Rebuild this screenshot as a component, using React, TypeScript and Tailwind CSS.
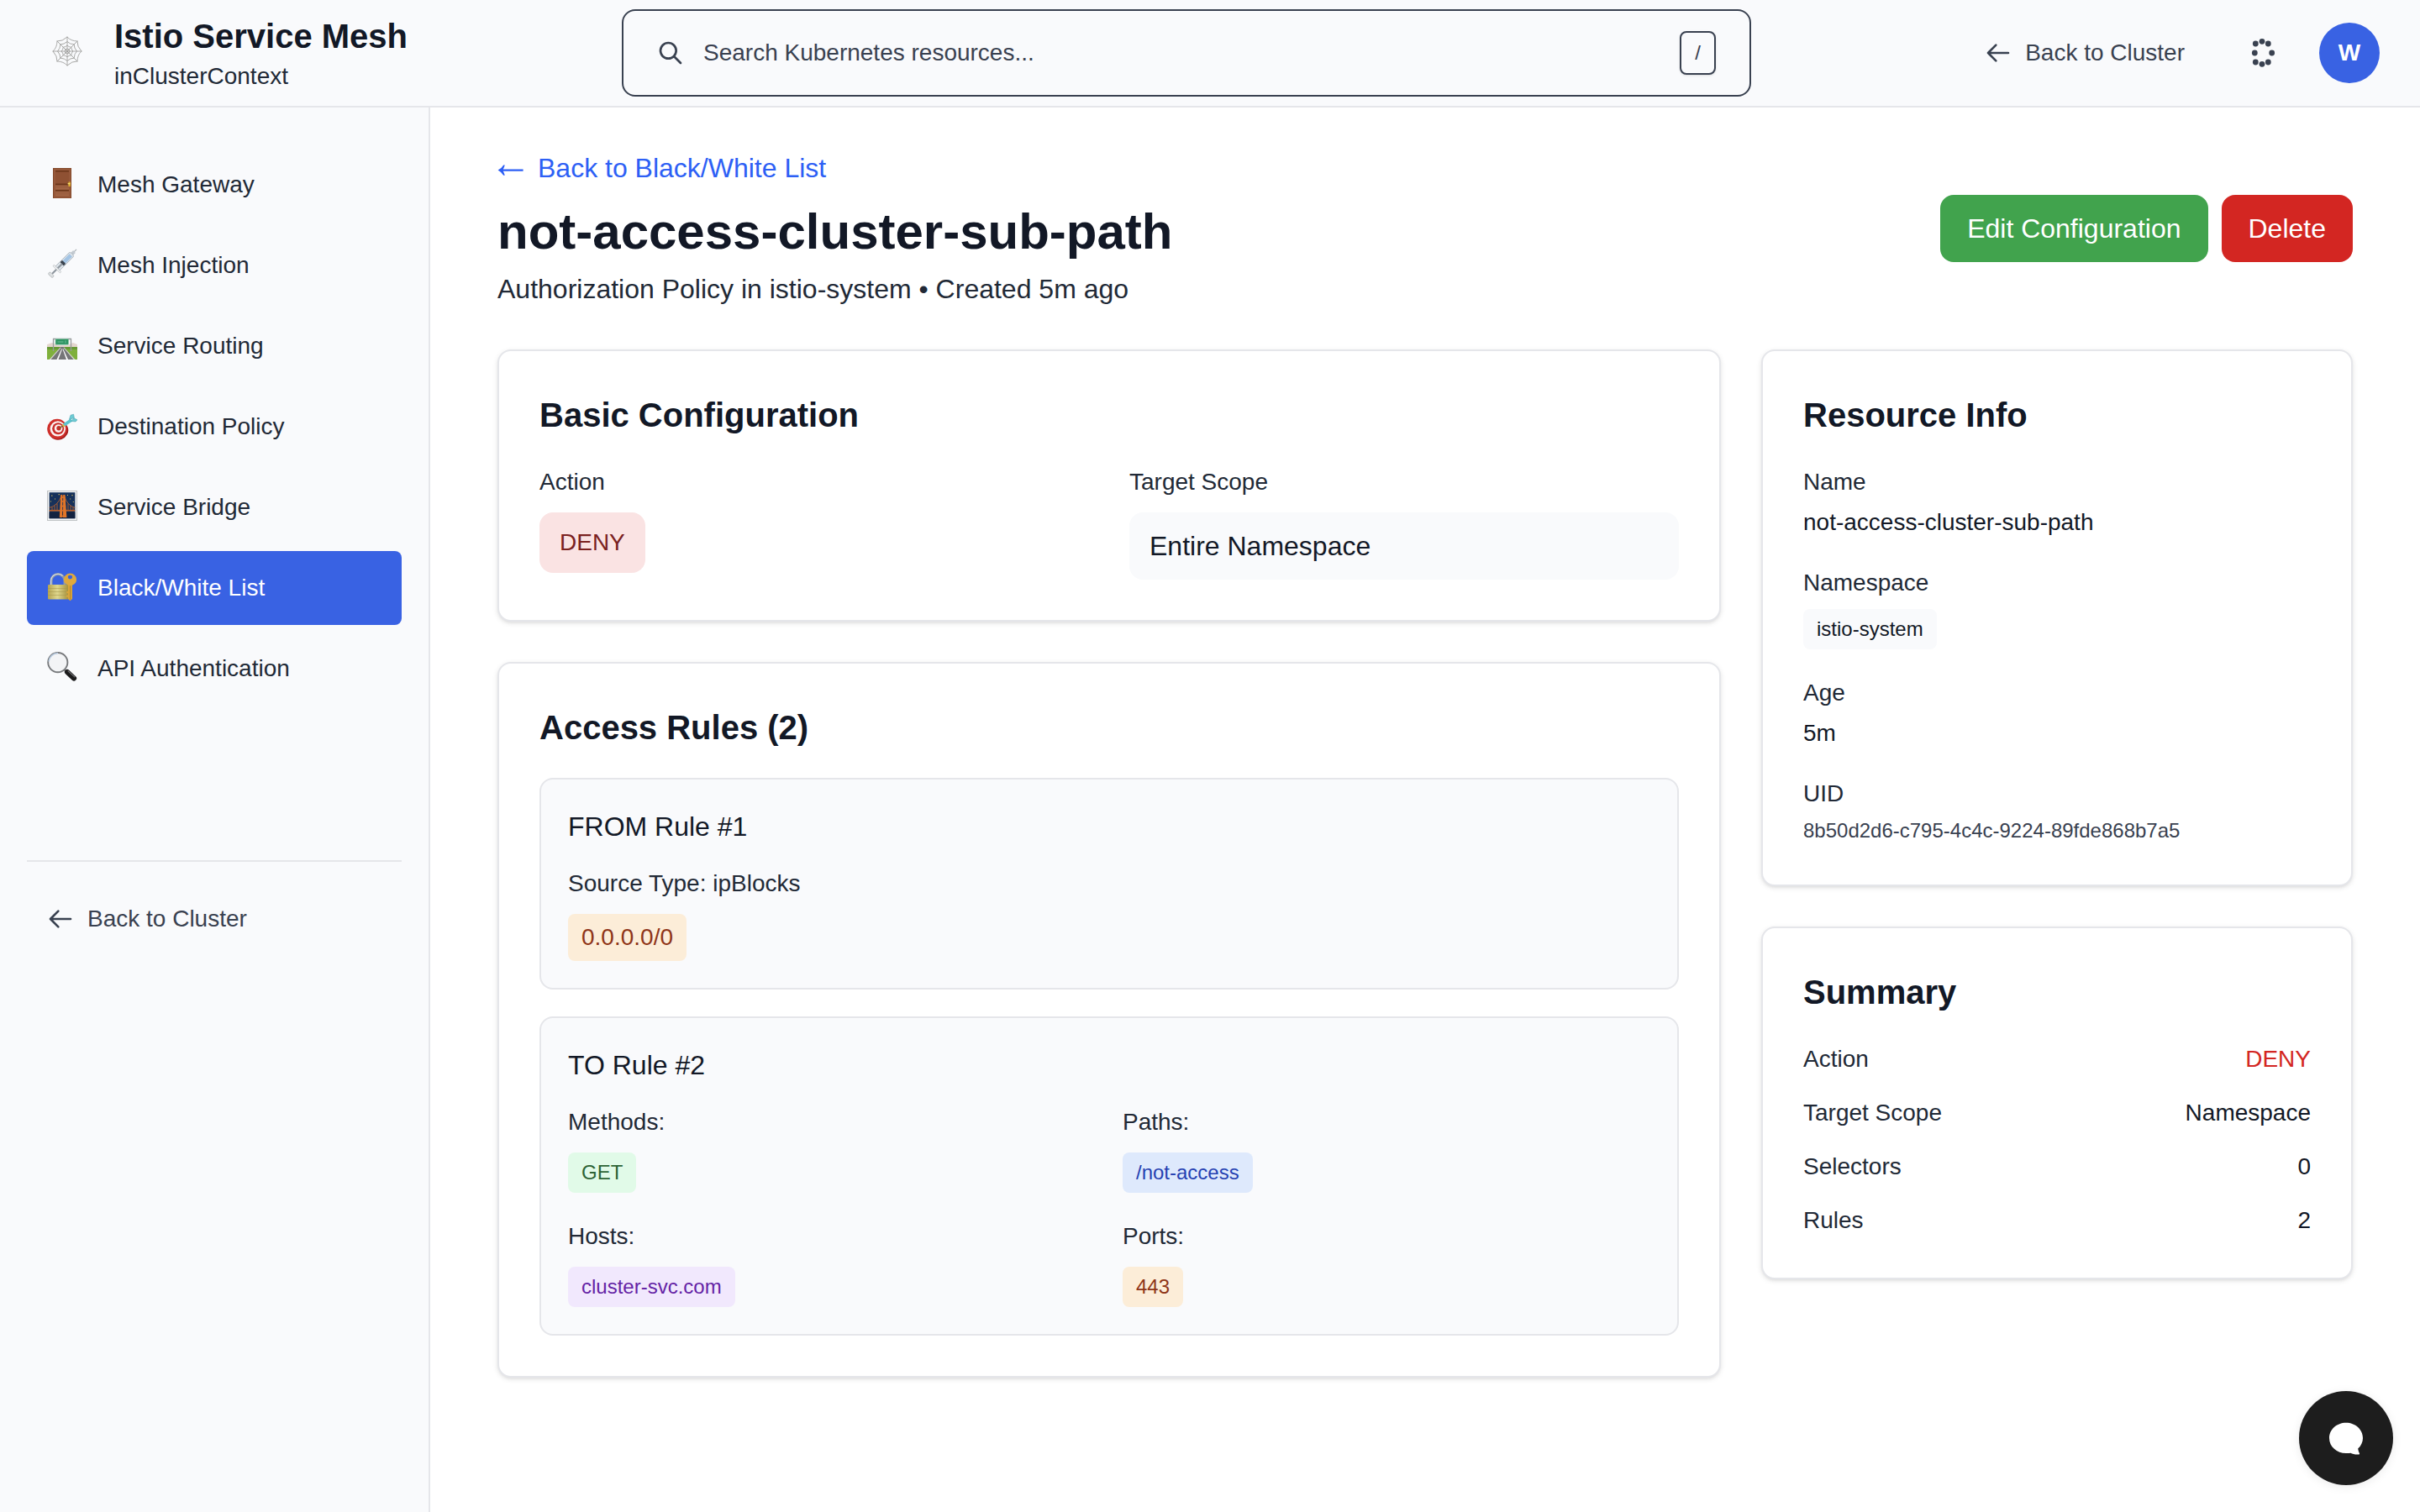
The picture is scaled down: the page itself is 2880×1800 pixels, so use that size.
import type { ReactNode } from 'react';

function ArrowLeft() {
  return (
    <svg className="h-8 w-8 shrink-0" viewBox="0 0 24 24" fill="none" stroke="currentColor" strokeWidth={2} strokeLinecap="round" strokeLinejoin="round">
      <path d="M10 19l-7-7m0 0l7-7m-7 7h18" />
    </svg>
  );
}

function LongArrowLeft() {
  return (
    <svg className="h-12 w-8 shrink-0" viewBox="0 0 32 48" fill="currentColor">
      <path d="M.6 26.6Q5.2 24 7.2 20.4H8.8Q8 23.2 6.8 25.4H30.6V27.8H6.8Q8 30 8.8 32.8H7.2Q5.2 29.2 .6 26.6z" />
    </svg>
  );
}

function SearchIcon() {
  return (
    <svg className="h-8 w-8 shrink-0" viewBox="0 0 24 24" fill="none" stroke="currentColor" strokeWidth={2} strokeLinecap="round" strokeLinejoin="round">
      <path d="M21 21l-6-6m2-5a7 7 0 11-14 0 7 7 0 0114 0z" />
    </svg>
  );
}

function WebLogo() {
  const spokes = [0, 45, 90, 135, 180, 225, 270, 315];
  return (
    <svg className="mb-1 h-9 w-9" viewBox="-18 -18 36 36" fill="none" stroke="#a3a3a1" strokeWidth={0.9} strokeLinejoin="round">
      {spokes.map((a) => (
        <g key={a} transform={`rotate(${a})`}>
          <path d="M0 0V-17.5" />
          <path d="M0-17Q4.2-12.2 12-12" />
          <path d="M0-11.5Q3-8.4 8.1-8.1" />
          <path d="M0-6.8Q2-5 4.8-4.8" />
          <path d="M0-3Q1-2.3 2.1-2.1" />
        </g>
      ))}
    </svg>
  );
}

function ThemeIcon() {
  const dots = [[16, 2.3], [23.3, 5], [27.7, 16], [23.3, 27], [16, 29.3], [8.3, 27], [7.3, 16], [8.3, 5]];
  return (
    <svg className="h-8 w-8 overflow-visible" viewBox="0 0 32 32" fill="currentColor">
      {dots.map(([x, y]) => (
        <circle key={`${x}-${y}`} cx={x} cy={y} r={3.4} />
      ))}
    </svg>
  );
}

function DoorIcon() {
  return (
    <svg className="h-9 w-9" viewBox="0 0 36 36">
      <rect x="7" y="0" width="22" height="36" fill="#84492b" />
      <rect x="8" y="1" width="20" height="34.5" fill="#96583a" />
      <rect x="10" y="3" width="16" height="15.5" fill="#8f5133" />
      <path d="M10 3h16v1.6H10zM10 18.6h16v1.8H10zM10 26h16v1.8H10z" fill="#6a3519" />
      <path d="M10 20.4h16v3.8H10zM10 27.8h16v4H10z" fill="#9c5f40" />
      <path d="M10 24.2h16v1H10zM10 31.8h16v1H10z" fill="#a86b4b" />
      <rect x="25.4" y="16.5" width="2.6" height="5.6" rx=".5" fill="#d9a92f" />
      <rect x="24.6" y="18" width="3" height="1.4" fill="#f6dc73" />
    </svg>
  );
}

function SyringeIcon() {
  return (
    <svg className="h-9 w-9" viewBox="0 0 36 36">
      <path d="M28.5 7.5L35 .8" stroke="#a9afb5" strokeWidth="1.1" />
      <g transform="rotate(45 18 18)">
        <rect x="16" y="-2.5" width="4" height="4" fill="#c3cad1" />
        <path d="M14.5 2.5Q18-.5 21.5 2.5V26h-7z" fill="#dde4ea" stroke="#aab2ba" strokeWidth=".8" />
        <rect x="15.8" y="3.5" width="4.6" height="12" fill="#a3c4e4" />
        <rect x="15" y="15" width="6" height="3.6" rx="1" fill="#39424d" />
        <rect x="17" y="18" width="2" height="17" fill="#8d959d" />
        <rect x="12" y="25.6" width="12" height="2" rx="1" fill="#f2f4f5" stroke="#b3b8bc" strokeWidth=".7" />
        <rect x="14.4" y="35" width="7.2" height="3.4" rx="1.6" fill="#dcdfe1" stroke="#aeb2b5" strokeWidth=".7" />
      </g>
    </svg>
  );
}

function RoadIcon() {
  return (
    <svg className="h-9 w-9" viewBox="0 0 36 36">
      <path d="M0 18l6-2 7 3h11l7-3 5 2v4H0z" fill="#e4d6cf" />
      <rect y="21" width="36" height="15" fill="#7fb03c" />
      <path d="M0 21h36v3H0z" fill="#679a35" />
      <path d="M16 21h4l12 15H3z" fill="#757678" />
      <path d="M16.5 22L4.5 36h-1.8L15.8 21.5zM19.6 22l12 14h1.8L20.2 21.5z" fill="#d8d8d0" />
      <path d="M17.2 23.5L11.5 36h2l4.5-12.5zM18.5 23.5L23 36h2l-5.7-12.5z" fill="#fff" />
      <path d="M7 11.5h22M7.5 11v15M28.5 11v15" stroke="#979b9c" strokeWidth="1.3" />
      <rect x="10" y="11.5" width="15.6" height="6.8" rx=".8" fill="#2e9463" stroke="#93c8ad" strokeWidth=".7" />
      <path d="M12.5 15h7M22 13.4v3" stroke="#79c3a0" strokeWidth=".9" />
    </svg>
  );
}

function TargetIcon() {
  return (
    <svg className="h-9 w-9" viewBox="0 0 36 36">
      <g transform="translate(0 5)">
        <ellipse cx="13.6" cy="19.8" rx="11.8" ry="10.8" transform="rotate(-20 13.6 19.8)" fill="#a61c1c" />
        <circle cx="12" cy="17.6" r="11.8" fill="#cf2f2b" />
        <circle cx="12.8" cy="17.4" r="9.2" fill="#fbf3f2" />
        <circle cx="13.2" cy="17.2" r="7" fill="#c92d2a" />
        <circle cx="13.6" cy="17" r="4.8" fill="#fbf3f2" />
        <circle cx="14" cy="16.8" r="2.7" fill="#c92d2a" />
        <path d="M14.2 16.8l6-3.6" stroke="#7d5a2a" strokeWidth="1.5" />
        <path d="M18.4 12.4l2.4 2.4" stroke="#e0b63e" strokeWidth="2" />
        <path d="M19 11.4l9-6 2.2 3.2-8.7 5.6z" fill="#5cc4cf" />
        <path d="M26.4 6.4L28 1.2 31.6.2l.8 4.4zM28.4 8.4l3.6-3.6 4 2-2 2.200z" fill="#6dcbd4" stroke="#3e9aa8" strokeWidth=".5" />
      </g>
    </svg>
  );
}

function BridgeIcon() {
  return (
    <svg className="h-9 w-9" viewBox="0 0 36 36">
      <rect x=".5" y=".5" width="35" height="35" fill="#f5f6f6" stroke="#bfc2c4" />
      <rect x="2.6" y="2.2" width="30.8" height="31" fill="#16315a" />
      <path d="M2.6 25.5h30.8v7.7H2.6z" fill="#132240" />
      <path d="M2.6 20.5Q13 18 17 6.5M33.4 20.5Q24 18 20.5 6.5M6 20v4M9 18v6M12 15.5V24M25 15.5V24M28 18v6M31 20v4" fill="none" stroke="#b9622e" strokeWidth=".9" />
      <path d="M2.6 23.8h30.8" stroke="#b5602e" strokeWidth="1.8" />
      <path d="M14.8 32L16.2 5h2.2L18.2 32zM19 32L19.2 5h2.2l2 27z" fill="#e27528" />
      <path d="M16.4 8h5M16 13h5.6M15.8 18.5h6.4M15 30.5h8" stroke="#e27528" strokeWidth="1.6" />
      <path d="M5.2 5.6h1.2v1.2H5.2zM13.6 4h1.2v1.2h-1.2zM29.4 5h1.2v1.2h-1.2zM4 12.5h1v1H4zM9 9.5h1v1H9zM27.2 9.6h1v1h-1zM24 5h1v1h-1zM30.8 13h1v1h-1z" fill="#d9be5a" />
    </svg>
  );
}

function LockKeyIcon() {
  return (
    <svg className="h-9 w-9" viewBox="0 0 36 36">
      <defs>
        <linearGradient id="lockBody" x1="0" x2="1" y1="0" y2="0">
          <stop offset="0" stopColor="#b5a34f" />
          <stop offset=".45" stopColor="#dfd78e" />
          <stop offset="1" stopColor="#a48e37" />
        </linearGradient>
      </defs>
      <path d="M5 17v-5.5a8 8 0 0116 0V17" fill="none" stroke="#8f9aa6" strokeWidth="3" />
      <path d="M4.6 16v-4.5a8.4 8.4 0 0114-6" fill="none" stroke="#d6dce2" strokeWidth="1.2" />
      <rect x="1" y="16" width="25" height="17.5" rx="1" fill="url(#lockBody)" />
      <path d="M1 20.5h25M1 24.5h25M1 28.5h25" stroke="#a3944a" strokeWidth=".7" opacity=".7" />
      <path d="M25 15h5v18l-2.5 2.2L25 33z" fill="#d9a53a" />
      <path d="M25 24h-1.8v2.2H25zM25 28.5h-2.2v2.2H25z" fill="#d9a53a" />
      <path d="M27.8 16v18" stroke="#b17f24" strokeWidth=".9" />
      <path fillRule="evenodd" d="M27.5 2.6a7.6 7.3 0 100 14.6 7.6 7.3 0 000-14.6zm0 2.2a2.6 2.3 0 110 4.6 2.6 2.3 0 010-4.6z" fill="#e0a93c" />
    </svg>
  );
}

function MagnifierIcon() {
  return (
    <svg className="h-9 w-9" viewBox="0 0 36 36">
      <path d="M20 20.5l3 3" stroke="#777" strokeWidth="2.4" />
      <path d="M24 24l8 7.5" stroke="#1b1b1c" strokeWidth="6.2" strokeLinecap="round" />
      <path d="M25 22.8l7.8 7" stroke="#6b6b6d" strokeWidth="1.2" strokeLinecap="round" />
      <circle cx="12.8" cy="12.6" r="11.6" fill="#f3f4f6" stroke="#77797c" strokeWidth="1.9" />
      <path d="M2 11.5A11.2 11.2 0 0113 1.5" fill="none" stroke="#b9cbe0" strokeWidth="1.5" />
    </svg>
  );
}

const navItems = [
  { label: 'Mesh Gateway', icon: <DoorIcon /> },
  { label: 'Mesh Injection', icon: <SyringeIcon /> },
  { label: 'Service Routing', icon: <RoadIcon /> },
  { label: 'Destination Policy', icon: <TargetIcon /> },
  { label: 'Service Bridge', icon: <BridgeIcon /> },
  { label: 'Black/White List', icon: <LockKeyIcon />, active: true },
  { label: 'API Authentication', icon: <MagnifierIcon /> },
];

function Header() {
  return (
    <header className="flex h-32 items-center border-b-2 border-[#e5e6ea] bg-[#f9fafc] px-12 text-[#394150]">
      <div className="flex w-[692px] shrink-0 items-center gap-6">
        <div className="flex w-16 justify-center">
          <WebLogo />
        </div>
        <div>
          <h1 className="text-[40px] leading-[56px] font-bold text-[#121826]">Istio Service Mesh</h1>
          <p className="text-[28px] leading-10 text-[#212936]">inClusterContext</p>
        </div>
      </div>
      <div className="flex h-[104px] w-[1344px] shrink-0 items-center gap-[23px] rounded-2xl border-2 border-[#394150] px-10">
        <SearchIcon />
        <span className="flex-1 text-[28px] leading-10">Search Kubernetes resources...</span>
        <kbd className="flex h-[52px] w-[43px] items-center justify-center rounded-lg border-2 border-[#394150] bg-[#f9fafc] font-['Liberation_Sans',Arial,sans-serif] text-2xl shadow-sm">/</kbd>
      </div>
      <div className="ml-auto flex items-center">
        <a className="flex items-center gap-4 text-[28px] leading-10">
          <ArrowLeft />
          Back to Cluster
        </a>
        <button className="mr-[52px] ml-[76px]">
          <ThemeIcon />
        </button>
        <div className="flex h-[72px] w-[72px] items-center justify-center rounded-full bg-[#3962e3] text-[28px] font-bold text-white">W</div>
      </div>
    </header>
  );
}

function Sidebar() {
  return (
    <aside className="w-[512px] shrink-0 border-r-2 border-[#e5e6ea] bg-[#f9fafc] px-8 pt-12">
      <nav className="flex h-[848px] flex-col gap-2">
        {navItems.map((item) => (
          <a
            key={item.label}
            className={
              item.active
                ? 'flex h-[88px] items-center gap-6 rounded-lg bg-[#3962e3] px-6 text-[28px] leading-10 text-white'
                : 'flex h-[88px] items-center gap-6 rounded-lg px-6 text-[28px] leading-10 text-[#212936]'
            }
          >
            <span className="mb-1 shrink-0">{item.icon}</span>
            {item.label}
          </a>
        ))}
      </nav>
      <div className="border-t-2 border-[#e5e6ea] pt-6">
        <a className="flex h-[88px] items-center gap-4 px-6 text-[28px] leading-10 text-[#394150]">
          <ArrowLeft />
          Back to Cluster
        </a>
      </div>
    </aside>
  );
}

function Card({ title, children }: { title: string; children: ReactNode }) {
  return (
    <section className="rounded-2xl border-2 border-[#e5e6ea] bg-white p-12 shadow-[0_2px_6px_rgba(0,0,0,0.1),0_2px_4px_-2px_rgba(0,0,0,0.1)]">
      <h2 className="mb-8 text-[40px] leading-[56px] font-bold text-[#121826]">{title}</h2>
      {children}
    </section>
  );
}

function Label({ children }: { children: ReactNode }) {
  return <div className="text-[28px] leading-10 text-[#212936]">{children}</div>;
}

function BasicConfiguration() {
  return (
    <Card title="Basic Configuration">
      <div className="grid grid-cols-2 items-start gap-12">
        <div>
          <Label>Action</Label>
          <span className="mt-4 block w-fit rounded-2xl bg-[#fae3e3] px-6 py-4 text-[28px] leading-10 text-[#7a2120]">DENY</span>
        </div>
        <div>
          <Label>Target Scope</Label>
          <div className="mt-4 rounded-2xl bg-[#f9fafc] px-6 py-4 text-[32px] leading-[48px] text-[#121826]">Entire Namespace</div>
        </div>
      </div>
    </Card>
  );
}

const destinations = [
  { label: 'Methods:', value: 'GET', tone: 'bg-[#e1fae8] text-[#2d6335]' },
  { label: 'Paths:', value: '/not-access', tone: 'bg-[#dee9fc] text-[#2541b2]' },
  { label: 'Hosts:', value: 'cluster-svc.com', tone: 'bg-[#f1e8fd] text-[#6423a5]' },
  { label: 'Ports:', value: '443', tone: 'bg-[#fcedd8] text-[#8f3518]' },
];

function Rule({ title, children }: { title: string; children: ReactNode }) {
  return (
    <div className="rounded-2xl border-2 border-[#e5e6ea] bg-[#f9fafc] p-8">
      <h3 className="mb-6 text-[32px] leading-[48px] text-[#121826]">{title}</h3>
      {children}
    </div>
  );
}

function AccessRules() {
  return (
    <Card title="Access Rules (2)">
      <div className="flex flex-col gap-8">
        <Rule title="FROM Rule #1">
          <Label>Source Type: ipBlocks</Label>
          <span className="mt-4 block w-fit rounded-lg bg-[#fcedd8] px-4 py-2 text-[28px] leading-10 text-[#8f3518]">0.0.0.0/0</span>
        </Rule>
        <Rule title="TO Rule #2">
          <div className="grid grid-cols-2 gap-8">
            {destinations.map((d) => (
              <div key={d.label}>
                <Label>{d.label}</Label>
                <span className={`mt-4 block w-fit rounded-lg px-4 py-2 text-2xl ${d.tone}`}>{d.value}</span>
              </div>
            ))}
          </div>
        </Rule>
      </div>
    </Card>
  );
}

function ResourceInfo() {
  return (
    <Card title="Resource Info">
      <Label>Name</Label>
      <div className="mt-2 text-[28px] leading-10 text-[#121826]">not-access-cluster-sub-path</div>
      <div className="mt-8">
        <Label>Namespace</Label>
        <span className="mt-[11px] block w-fit rounded-lg bg-[#f9fafc] px-4 py-2 text-2xl text-[#121826]">istio-system</span>
      </div>
      <div className="mt-8">
        <Label>Age</Label>
        <div className="mt-2 text-[28px] leading-10 text-[#121826]">5m</div>
      </div>
      <div className="mt-8">
        <Label>UID</Label>
        <div className="mt-2 text-2xl text-[#394150]">8b50d2d6-c795-4c4c-9224-89fde868b7a5</div>
      </div>
    </Card>
  );
}

const summary = [
  { label: 'Action', value: 'DENY', tone: 'text-[#d32622]' },
  { label: 'Target Scope', value: 'Namespace', tone: 'text-[#121826]' },
  { label: 'Selectors', value: '0', tone: 'text-[#121826]' },
  { label: 'Rules', value: '2', tone: 'text-[#121826]' },
];

function Summary() {
  return (
    <Card title="Summary">
      <div className="flex flex-col gap-6">
        {summary.map((row) => (
          <div key={row.label} className="flex justify-between">
            <Label>{row.label}</Label>
            <div className={`text-[28px] leading-10 ${row.tone}`}>{row.value}</div>
          </div>
        ))}
      </div>
    </Card>
  );
}

function ChatButton() {
  return (
    <button className="fixed right-8 bottom-8 flex h-28 w-28 items-center justify-center rounded-full bg-[#1d1d1d] shadow-[0_2px_12px_rgba(0,0,0,0.08)]">
      <svg className="h-28 w-28" viewBox="0 0 112 112" fill="#fff">
        <path d="M56 37.7C67 37.7 76 45.5 76 56c0 4.8-2.2 9.3-5.8 12.6.3 2.2.8 4 1.7 5.3.4.8 0 1.5-.9 1.5-3.9.2-7.2-.3-9.6-1.7-1.7.4-3.5.3-5.4.3C45 74 36 66.3 36 56S45 37.7 56 37.7z" />
      </svg>
    </button>
  );
}

export default function App() {
  return (
    <div className="flex h-[1800px] w-[2880px] flex-col overflow-hidden bg-white font-['Liberation_Sans',Arial,sans-serif]">
      <Header />
      <div className="flex flex-1">
        <Sidebar />
        <main className="flex-1 px-20 py-12">
          <div className="flex items-center justify-between">
            <div>
              <a className="flex items-center gap-4 text-[32px] leading-[48px] text-[#2d5ff5]">
                <LongArrowLeft />
                Back to Black/White List
              </a>
              <h1 className="mt-4 text-6xl leading-[72px] font-bold text-[#121826]">not-access-cluster-sub-path</h1>
              <p className="mt-2 text-[32px] leading-[48px] text-[#212936]">Authorization Policy in istio-system • Created 5m ago</p>
            </div>
            <div className="flex gap-4 text-[32px] leading-[48px] text-white">
              <button className="rounded-2xl bg-[#41a34d] px-8 py-4">Edit Configuration</button>
              <button className="rounded-2xl bg-[#d32622] px-8 py-4">Delete</button>
            </div>
          </div>
          <div className="mt-12 grid grid-cols-3 items-start gap-12">
            <div className="col-span-2 flex flex-col gap-12">
              <BasicConfiguration />
              <AccessRules />
            </div>
            <div className="flex flex-col gap-12">
              <ResourceInfo />
              <Summary />
            </div>
          </div>
        </main>
      </div>
      <ChatButton />
    </div>
  );
}
